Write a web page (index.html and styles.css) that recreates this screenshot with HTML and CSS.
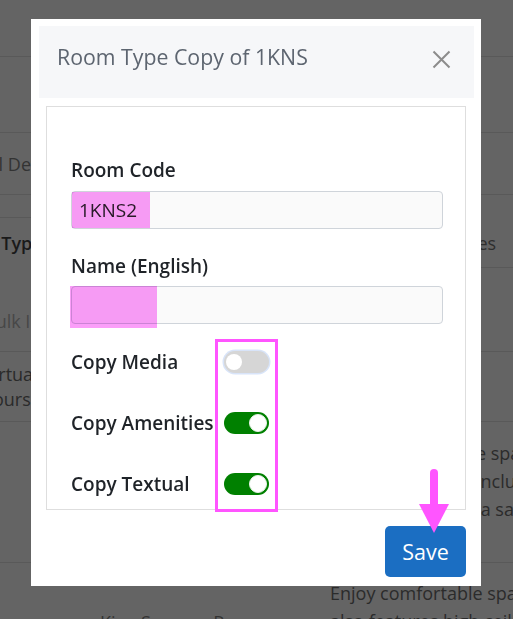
FILE: index.html
```html
<!DOCTYPE html>
<html lang="en">
<head>
<meta charset="utf-8">
<title>Room Type Copy</title>
<link rel="stylesheet" href="styles.css">
</head>
<body>
<div class="page">
  <div class="cols">
    <div class="side">
      <div class="srow r57"></div>
      <div class="srow r76"></div>
      <div class="srow r62 mid"><span class="stext t-det">Hotel Details</span></div>
      <div class="srow r23"></div>
      <div class="srow r134 top">
        <span class="stext t-type">Room Type</span>
        <span class="stext t-bulk">Bulk Import</span>
      </div>
      <div class="srow r70 top">
        <span class="stext t-virt">Virtual<br>Tours</span>
      </div>
      <div class="srow r141"></div>
    </div>
    <div class="main">
      <div class="mrow r57"></div>
      <div class="mrow r76"></div>
      <div class="mrow r62"></div>
      <div class="mrow r73"><span class="mtext m-es">Images</span></div>
      <div class="mrow r84"></div>
      <div class="mrow r70"></div>
      <div class="mrow r141">
        <div class="desc">
          <div>e spacious</div>
          <div>includes</div>
          <div>&nbsp;a safe</div>
        </div>
      </div>
    </div>
  </div>
  <div class="lastrow">
    <div class="lname">King Superor Room</div>
    <div class="ldesc">
      <div>Enjoy comfortable spacious</div>
      <div>also features high ceilings</div>
    </div>
  </div>
</div>

<div class="overlay">
  <div class="modal">
    <div class="mhead">
      <h2 class="mtitle">Room Type Copy of 1KNS</h2>
      <button class="close" aria-label="Close">
        <svg width="19" height="19" viewBox="0 0 19 19"><path d="M1.5 1.5 L17.5 17.5 M17.5 1.5 L1.5 17.5" stroke="#8c8c8c" stroke-width="2" fill="none"/></svg>
      </button>
    </div>
    <div class="mbody">
      <label class="flabel">Room Code</label>
      <div class="field">
        <input class="finput" type="text" value="1KNS2">
        <span class="hl hl1"></span>
      </div>
      <label class="flabel">Name (English)</label>
      <div class="field">
        <input class="finput" type="text" value="">
        <span class="hl hl2"></span>
      </div>
      <div class="copyrow">
        <div class="clabels">
          <div class="clabel">Copy Media</div>
          <div class="clabel">Copy Amenities</div>
          <div class="clabel">Copy Textual</div>
        </div>
        <div class="cbox">
          <span class="sw"><span class="knob"></span></span>
          <span class="sw on"><span class="knob"></span></span>
          <span class="sw on"><span class="knob"></span></span>
        </div>
      </div>
    </div>
    <div class="mfoot">
      <div class="savewrap">
        <button class="save">Save</button>
        <svg class="arrow" width="32" height="66" viewBox="0 0 32 66">
          <path d="M16 5 L16 40" stroke="#ff55ff" stroke-width="8" stroke-linecap="round" fill="none"/>
          <path d="M1 36 L31 36 L16 65 Z" fill="#ff55ff"/>
        </svg>
      </div>
    </div>
  </div>
</div>
</body>
</html>
```

FILE: styles.css
```css
html, body {
  margin: 0;
  padding: 0;
}
body {
  width: 513px;
  height: 619px;
  overflow: hidden;
  background: #646464;
  font-family: "Open Sans", "DejaVu Sans", sans-serif;
  font-size: 18px;
  color: #2b2b2b;
}

/* ---------- background page ---------- */
.page {
  display: flex;
  flex-direction: column;
}
.cols {
  display: flex;
  height: 563px;
}
.side {
  width: 31px;
  flex: none;
  display: flex;
  flex-direction: column;
}
.main {
  flex: 1;
  display: flex;
  flex-direction: column;
}
.srow, .mrow {
  box-sizing: border-box;
  border-bottom: 1px solid #595959;
  white-space: nowrap;
  display: flex;
  flex-direction: column;
}
.srow.mid { justify-content: center; }
.r57 { height: 57px; }
.r76 { height: 76px; }
.r62 { height: 62px; }
.r23 { height: 23px; }
.r134 { height: 134px; }
.r70 { height: 70px; }
.r141 { height: 141px; }
.r73 { height: 73px; }
.r84 { height: 84px; }

.stext {
  line-height: 24px;
}
.t-det { margin-left: -42px; color: #333; }
.t-type { margin-left: -54px; margin-top: 13px; color: #1a1a1a; font-weight: 600; }
.t-bulk { margin-left: -16px; margin-top: 54px; color: #474747; }
.t-virt { margin-left: -17px; margin-top: 10px; line-height: 25px; color: #2a2a2a; }

.mtext { line-height: 24px; }
.m-es { padding-left: 405px; margin-top: 36px; color: #2e2e2e; }

.desc {
  padding-left: 445px;
  padding-top: 17px;
  line-height: 28px;
  color: #2b2b2b;
}

.lastrow {
  display: flex;
  white-space: nowrap;
  color: #2b2b2b;
}
.lname {
  padding-left: 100px;
  width: 330px;
  flex: none;
  box-sizing: border-box;
  padding-top: 45px;
  line-height: 28px;
  color: #333;
}
.ldesc {
  padding-top: 16px;
  line-height: 28px;
}

/* ---------- modal ---------- */
.overlay {
  position: fixed;
  inset: 0;
  display: flex;
  justify-content: flex-start;
  align-items: flex-start;
  padding: 19px 0 0 31px;
}
.modal {
  width: 450px;
  box-sizing: border-box;
  background: #fff;
  padding: 7px 7px 9px 8px;
  display: flex;
  flex-direction: column;
}
.mhead {
  height: 72px;
  box-sizing: border-box;
  background: #f6f7f9;
  display: flex;
  align-items: flex-start;
  justify-content: space-between;
  padding: 16px 23px 0 18px;
}
.mtitle {
  margin: 0;
  font-size: 21.3px;
  font-weight: 400;
  line-height: 29px;
  color: #5d6570;
}
.close {
  margin-top: 8px;
  padding: 0;
  border: 0;
  background: none;
  width: 19px;
  height: 19px;
  display: block;
}
.close svg { display: block; }

.mbody {
  margin: 8px 8px 0 7px;
  border: 1px solid #dedede;
  padding: 51px 22px 0 24px;
  display: flex;
  flex-direction: column;
}
.flabel {
  display: block;
  font-weight: 600;
  font-size: 19px;
  line-height: 24px;
  color: #1f2328;
  margin-bottom: 9px;
}
.field {
  position: relative;
  margin-bottom: 25px;
}
.finput {
  display: block;
  width: 100%;
  height: 38px;
  box-sizing: border-box;
  border: 1px solid #cfd4da;
  border-radius: 4px;
  background: #fafafa;
  padding: 0 7px;
  font-family: "Open Sans", "DejaVu Sans", sans-serif;
  font-size: 19px;
  color: #2a2a2a;
  outline: none;
}
.flabel:nth-of-type(2) { margin-bottom: 8px; }
.field:nth-of-type(2) { margin-bottom: 15px; }
.hl {
  position: absolute;
  background: #fb9ef9;
  mix-blend-mode: multiply;
}
.hl1 { left: 1px; top: 1px; width: 78px; height: 36px; }
.hl2 { left: -1px; top: 0; width: 87px; height: 42px; }

.copyrow {
  display: flex;
  margin-bottom: -3px;
}
.clabels {
  width: 144px;
  padding-top: 11px;
  display: flex;
  flex-direction: column;
  gap: 37px;
}
.clabel {
  font-weight: 600;
  font-size: 19px;
  line-height: 24px;
  color: #1f2328;
  white-space: nowrap;
}
.cbox {
  border: 3px solid #ff55ff;
  padding: 9px 6px 14px 6px;
  display: flex;
  flex-direction: column;
  gap: 39px;
}
.sw {
  position: relative;
  display: block;
  width: 45px;
  height: 22px;
  border-radius: 11px;
  background: #d6d6d6;
  box-shadow: 0 0 0 1.5px rgba(190, 210, 245, 0.6);
}
.knob {
  position: absolute;
  top: 3px;
  left: 2px;
  width: 16px;
  height: 16px;
  border-radius: 50%;
  background: #fff;
}
.sw.on {
  background: #008000;
  box-shadow: none;
}
.sw.on .knob {
  top: 2px;
  left: auto;
  right: 2px;
  width: 18px;
  height: 18px;
  box-sizing: border-box;
  border: 1px solid #e8f2e8;
}

.mfoot {
  display: flex;
  justify-content: flex-end;
  padding: 16px 8px 0 0;
}
.savewrap {
  position: relative;
}
.save {
  display: block;
  width: 81px;
  height: 51px;
  border: 0;
  border-radius: 5px;
  background: #1b6ec2;
  color: #fff;
  font-family: "Open Sans", "DejaVu Sans", sans-serif;
  font-size: 21.5px;
  padding: 0;
}
.arrow {
  position: absolute;
  left: 33px;
  top: -58px;
}
```
